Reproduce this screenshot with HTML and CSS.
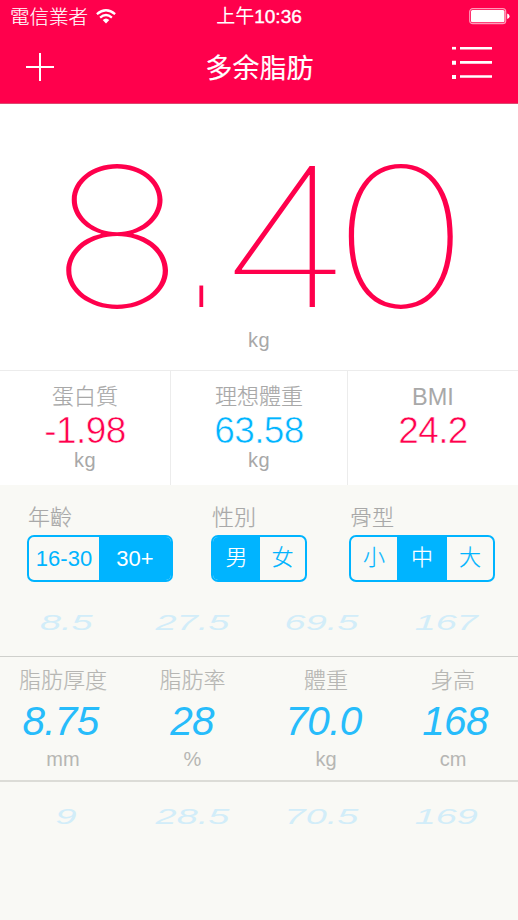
FILE: index.html
```html
<!DOCTYPE html>
<html lang="zh-Hant">
<head>
<meta charset="utf-8">
<title>多余脂肪</title>
<link rel="stylesheet" href="styles.css">
</head>
<body>
<header class="header">
  <div class="status">
    <div class="carrier"><span>電信業者</span>
      <svg class="wifi" width="20" height="15" viewBox="0 0 20 15" fill="none" stroke="#fff" stroke-width="2.3"><path d="M.9 5.2Q10-2.6 19.1 5.2M4.1 8.6Q10 3.4 15.9 8.6"/><path d="M6.7 11Q10 8 13.3 11L10 14.5Z" fill="#fff" stroke="none"/></svg>
    </div>
    <time class="clock">上午<b>10:36</b></time>
    <svg class="battery" width="41" height="17" viewBox="0 0 41 17"><rect x=".7" y=".7" width="36" height="15" rx="3" fill="none" stroke="#ff9bb9" stroke-width="1.2"/><rect x="2" y="2" width="33.5" height="12.3" rx="1.5" fill="#fff"/><path d="M38.2 5.4Q40.5 6 40.5 8.2T38.2 11Z" fill="#fff"/></svg>
  </div>
  <nav class="nav">
    <svg width="28" height="28" viewBox="0 0 28 28" stroke="#fff" stroke-width="2"><path d="M0 14H28M14 0V28"/></svg>
    <h1>多余脂肪</h1>
    <svg width="42" height="34" viewBox="0 0 42 34" stroke="#fff" stroke-width="2.6"><path d="M9 2.2H41M9 16.4H41M9 30.5H41"/><path d="M1 2.2H5" stroke-width="2.6"/><path d="M1 16.8H5M1 31H5" stroke-width="4"/></svg>
  </nav>
</header>
<main>
  <section class="total">
    <svg class="total-value" width="518" height="220" viewBox="0 0 518 220">
      <text transform="translate(50 203) scale(1.16 1)">8</text>
      <text class="point" transform="translate(195.7 203) scale(1 5)">.</text>
      <text transform="translate(218 203) scale(1.16 1)">4</text>
      <text transform="translate(332 203) scale(1.2 1)">0</text>
    </svg>
    <div class="unit">kg</div>
  </section>
  <section class="stats">
    <div class="stat"><h2>蛋白質</h2><strong class="red">-1.98</strong><span class="unit">kg</span></div>
    <div class="stat"><h2>理想體重</h2><strong>63.58</strong><span class="unit">kg</span></div>
    <div class="stat"><h2 class="latin">BMI</h2><strong class="red">24.2</strong></div>
  </section>
  <section class="options">
    <div class="option age"><h2>年齡</h2><div class="segments"><span>16-30</span><span class="on">30+</span></div></div>
    <div class="option sex"><h2>性別</h2><div class="segments"><span class="on">男</span><span>女</span></div></div>
    <div class="option bone"><h2>骨型</h2><div class="segments"><span>小</span><span class="on">中</span><span>大</span></div></div>
  </section>
  <section class="picker">
    <div class="row ghost above"><span>8.5</span><span>27.5</span><span>69.5</span><span>167</span></div>
    <div class="row current">
      <div class="measure"><h2>脂肪厚度</h2><strong>8.75</strong><span>mm</span></div>
      <div class="measure"><h2>脂肪率</h2><strong>28</strong><span>%</span></div>
      <div class="measure"><h2>體重</h2><strong>70.0</strong><span>kg</span></div>
      <div class="measure"><h2>身高</h2><strong>168</strong><span>cm</span></div>
    </div>
    <div class="row ghost below"><span>9</span><span>28.5</span><span>70.5</span><span>169</span></div>
  </section>
</main>
</body>
</html>
```

FILE: styles.css
```css
* { box-sizing: border-box; }
body {
  margin: 0;
  height: 920px;
  overflow: hidden;
  background: #f9f9f5;
  color: #a8a8a8;
  font-family: "Liberation Sans", "Noto Sans CJK TC", sans-serif;
}
h1, h2, strong { margin: 0; font-weight: 400; }
svg { display: block; flex: none; }

.header { height: 104px; background: #ff004c; color: #fff; border-bottom: 1px solid #dc4870; }
.status {
  display: grid;
  grid-template-columns: 1fr auto 1fr;
  align-items: center;
  height: 33px;
  padding: 0 8px 0 8px;
}
.carrier { display: flex; align-items: center; gap: 8px; padding-left: 2px; font-size: 19.5px; line-height: 32px; font-weight: 300; -webkit-text-stroke: .15px #fff; }
.wifi { margin-bottom: 1px; }
.clock { font-size: 19px; line-height: 32px; padding-top: 1px; }
.clock b { font-weight: 400; -webkit-text-stroke: .4px #fff; }
.battery { justify-self: end; }
.nav { display: grid; grid-template-columns: 1fr auto 1fr; align-items: center; height: 67px; padding: 0 25px 0 26px; }
.nav h1 { font-size: 27px; line-height: 40px; padding-top: 5px; -webkit-text-stroke: .15px #fff; }
.nav svg:last-child { justify-self: end; margin-bottom: 8px; }

.total { height: 266px; background: #fff; text-align: center; }
.total-value { overflow: visible; }
.total-value text { font: 100 194px Inter, sans-serif; fill: #ff004c; }
.total-value .point { font: 40px "Liberation Sans", sans-serif; }
.unit { font-size: 20px; line-height: 24px; letter-spacing: .5px; }
.total .unit { padding-top: 4px; }

.stats {
  display: grid;
  grid-template-columns: 171px 177px 170px;
  height: 115px;
  background: #fff;
  border-top: 1px solid #ececec;
}
.stat { display: flex; flex-direction: column; align-items: center; border-right: 1px solid #ececec; padding-top: 10px; }
.stat:last-child { border: 0; }
h2 { font-size: 22px; line-height: 32px; font-weight: 300; white-space: nowrap; -webkit-text-stroke: .2px currentColor; }
h2.latin { font-size: 23.5px; -webkit-text-stroke: 0; }
.stat strong { font-size: 37px; line-height: 36px; letter-spacing: -.6px; color: #00b4ff; -webkit-text-stroke: .6px #fff; }
.stat strong.red { color: #ff004c; }
.stat .unit { margin-top: -1px; }

.options { display: flex; height: 107px; padding: 17px 0 0 27px; }
.option { width: 146px; }
.option h2 { padding-left: 1px; }
.sex { width: 96px; margin: 0 42px 0 38px; }
.segments {
  display: grid;
  grid-template-columns: 70px 1fr;
  height: 47px;
  margin-top: 1px;
  border: 2px solid #00b4ff;
  border-radius: 7px;
  overflow: hidden;
  color: #00b4ff;
  font-size: 22px;
  font-weight: 300;
  line-height: 43px;
  text-align: center;
}
.sex .segments, .bone .segments { line-height: 41px; -webkit-text-stroke: .2px currentColor; }
.sex .segments { grid-template-columns: 47px 1fr; }
.bone .segments { grid-template-columns: 46px 50px 1fr; }
.segments .on { background: #00b4ff; color: #fff; }

.row { display: grid; grid-template-columns: 126px 133px 134px 120px; justify-items: center; }
.ghost { grid-template-columns: 125px 127px 130px 120px; font-size: 22px; font-style: italic; line-height: 24px; color: #d2edf9; }
.ghost span { transform: scaleX(1.72); }
.above { height: 64px; padding: 19px 0 0 4px; }
.below { padding: 23px 0 0 4px; }
.current { height: 126px; padding-top: 8px; border-top: 1px solid #cfd0cc; border-bottom: 2px solid #dcdcd7; color: #b6b6b3; }
.measure { display: flex; flex-direction: column; align-items: center; }
.measure strong { margin-left: -5px; font-size: 40.5px; line-height: 48px; letter-spacing: -.7px; font-style: italic; color: #27bcfb; }
.measure:nth-child(2) strong { margin-left: -1px; }
.measure:nth-child(4) strong { margin-left: 4px; }
.measure span { margin-top: 2px; font-size: 20px; line-height: 24px; }
```
